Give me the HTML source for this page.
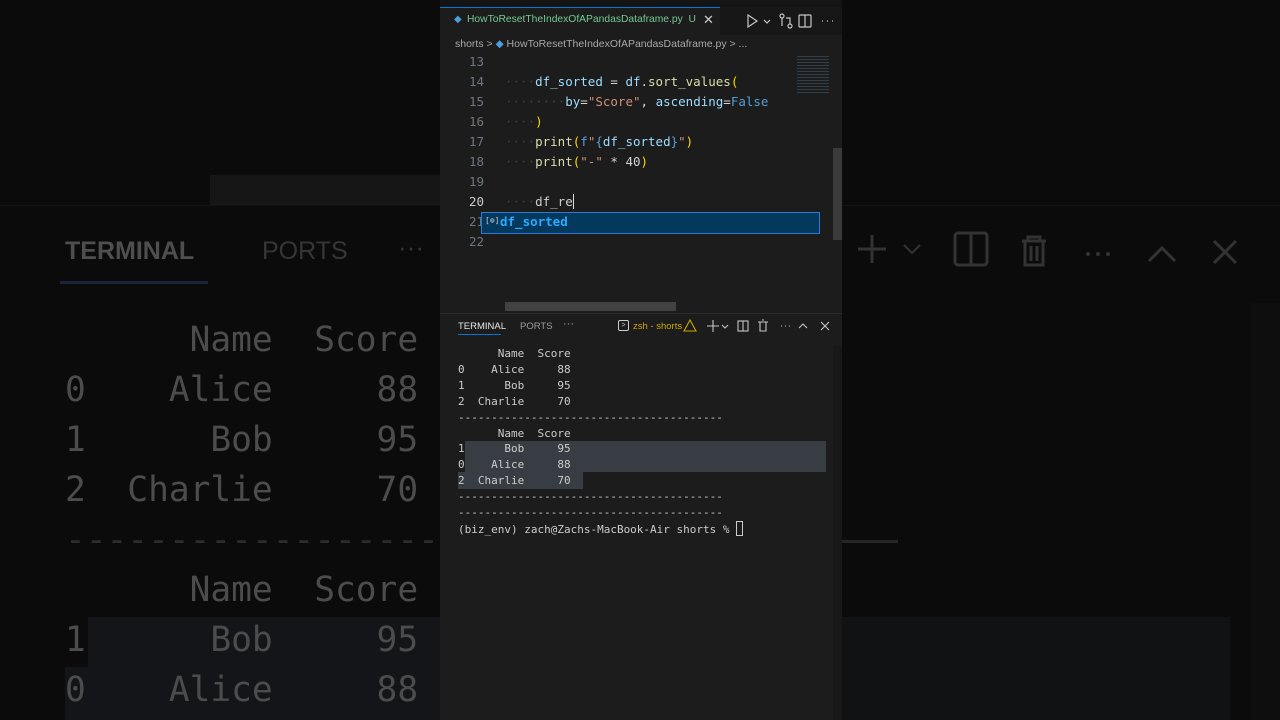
<!DOCTYPE html>
<html><head><meta charset="utf-8"><style>
*{margin:0;padding:0;box-sizing:border-box}
body{width:1280px;height:720px;background:#0b0b0c;position:relative;overflow:hidden;font-family:"Liberation Sans",sans-serif}
.a{position:absolute}
.mono{font-family:"DejaVu Sans Mono","Liberation Mono",monospace;white-space:pre}
.big{font-size:34.5px;color:#4c4c4c;line-height:50px}
.code{font-size:12.5px;line-height:20px}
.term{font-size:11px;line-height:15.9px;color:#cccccc}
.v{color:#9cdcfe}.f{color:#dcdcaa}.s{color:#ce9178}.k{color:#569cd6}.y{color:#ffd700}.w{color:#d4d4d4}.g{color:#404040}
</style></head><body>
<div class="a" style="left:210px;top:175px;width:230px;height:30px;background:#161617"></div>
<div class="a" style="left:0;top:205px;width:440px;height:1px;background:#131313"></div>
<div class="a" style="left:65px;top:237px;font-size:25px;color:#4e4e4e;font-weight:bold">TERMINAL</div>
<div class="a" style="left:262px;top:237px;font-size:25px;color:#363636">PORTS</div>
<div class="a" style="left:398px;top:232px;font-size:26px;color:#363636">···</div>
<div class="a" style="left:60px;top:281px;width:148px;height:3px;background:#17243a"></div>
<div class="a" style="left:88px;top:617px;width:352px;height:103px;background:#131518"></div>
<div class="a" style="left:65px;top:667px;width:23px;height:53px;background:#131518"></div>
<div class="a mono big" style="left:65px;top:315px">      Name  Score
0    Alice     88
1      Bob     95
2  Charlie     70
<span style="color:#2c2c2c">-----------------------------------</span>
      Name  Score
1      Bob     95
0    Alice     88</div>
<div class="a" style="left:842px;top:205px;width:438px;height:1px;background:#131313"></div>
<div class="a" style="left:842px;top:540px;width:56px;height:3px;background:#262626"></div>
<div class="a" style="left:842px;top:617px;width:388px;height:103px;background:#111214"></div>
<div class="a" style="left:1250px;top:303px;width:30px;height:417px;background:#0e0e0f"></div>
<svg class="a" style="left:842px;top:225px" width="400" height="60" viewBox="0 0 400 60" fill="none" stroke="#333" stroke-width="3">
<path d="M30 10v28M16 24h28"/><path d="M62 20l8 8 8-8" stroke-width="2"/>
<rect x="113" y="8" width="32" height="32" rx="3"/><path d="M129 8v32"/>
<path d="M180 16h24M186 16v-4h12v4M183 16v24h18v-24M189 21v15M195 21v15"/>
<circle cx="246" cy="29" r="2" fill="#333" stroke="none"/><circle cx="256" cy="29" r="2" fill="#333" stroke="none"/><circle cx="266" cy="29" r="2" fill="#333" stroke="none"/>
<path d="M307 36l13-13 13 13"/><path d="M372 16l22 22M394 16l-22 22"/>
</svg>
<div class="a" style="left:440px;top:0;width:402px;height:720px;background:#1c1c1c"></div>
<div class="a" style="left:440px;top:0;width:402px;height:7px;background:#141414"></div>
<div class="a" style="left:440px;top:7px;width:402px;height:28px;background:#171717"></div>
<div class="a" style="left:440px;top:7px;width:280px;height:28px;background:#1c1c1c;border-top:1px solid #0078d4"></div>
<div class="a" style="left:454px;top:14px;color:#4a9fd8;font-size:10px">◆</div>
<div class="a" style="left:467px;top:14px;font-size:10.3px;color:#73c991;white-space:nowrap">HowToResetTheIndexOfAPandasDataframe.py&nbsp; U</div>
<div class="a" style="left:703px;top:12px;font-size:13px;color:#ccc">✕</div>
<svg class="a" style="left:745px;top:12px" width="97" height="18" fill="none" stroke="#c5c5c5" stroke-width="1.2">
<path d="M3 3l9 6-9 6z"/><path d="M19 8l3 3 3-3"/><circle cx="37" cy="4" r="2"/><circle cx="45" cy="14" r="2"/><path d="M37 6v8M45 12V6h-4"/><rect x="54" y="3" width="12" height="12" rx="1"/><path d="M60 3v12"/><path d="M77 9h1M82 9h1M87 9h1"/></svg>
<div class="a" style="left:455px;top:38px;font-size:10.5px;color:#a9a9a9;white-space:nowrap">shorts &gt; <span style="color:#4a9fd8">◆</span> HowToResetTheIndexOfAPandasDataframe.py &gt; ...</div>
<div class="a mono code" style="left:458px;top:52px;width:26px;text-align:right;color:#6e7681">13
14
15
16
17
18
19
<span style="color:#ccc">20</span>
21
22</div>
<div class="a mono code" style="left:505px;top:52px">
<span class="g">····</span><span class="v">df_sorted</span> <span class="w">=</span> <span class="v">df</span><span class="w">.</span><span class="f">sort_values</span><span class="y">(</span>
<span class="g">········</span><span class="v">by</span><span class="w">=</span><span class="s">"Score"</span><span class="w">, </span><span class="v">ascending</span><span class="w">=</span><span class="k">False</span>
<span class="g">····</span><span class="y">)</span>
<span class="g">····</span><span class="f">print</span><span class="y">(</span><span class="k">f</span><span class="s">"</span><span class="k">{</span><span class="v">df_sorted</span><span class="k">}</span><span class="s">"</span><span class="y">)</span>
<span class="g">····</span><span class="f">print</span><span class="y">(</span><span class="s">"-"</span> <span class="w">*</span> <span class="w">40</span><span class="y">)</span>

<span class="g">····</span><span style="color:#ccc">df_re</span><span style="border-left:1px solid #ddd"></span></div>
<div class="a" style="left:797px;top:54px;width:32px;height:40px;opacity:.45;background:repeating-linear-gradient(#1c1c1c 0 2px,#4a6a80 2px 3px)"></div>
<div class="a" style="left:833px;top:148px;width:9px;height:92px;background:#3a3a3a"></div>
<div class="a" style="left:481px;top:212px;width:339px;height:22px;background:#04395e;border:1px solid #2b79d8"></div>
<div class="a mono" style="left:485px;top:216px;font-size:8px;color:#ccc">[⊚]</div>
<div class="a mono" style="left:500px;top:214px;font-size:12.5px;color:#2aaaff;font-weight:bold">df_sorted</div>
<div class="a" style="left:505px;top:302px;width:171px;height:9px;background:#424242"></div>
<div class="a" style="left:440px;top:313px;width:402px;height:1px;background:#2b2b2b"></div>
<div class="a" style="left:458px;top:321px;font-size:9.5px;color:#e7e7e7">TERMINAL</div>
<div class="a" style="left:458px;top:334px;width:43px;height:1px;background:#0078d4"></div>
<div class="a" style="left:520px;top:321px;font-size:9.5px;color:#9d9d9d">PORTS</div>
<div class="a" style="left:563px;top:318px;font-size:11px;color:#9d9d9d">···</div>
<div class="a" style="left:618px;top:320px;width:11px;height:11px;border:1px solid #ccc;border-radius:2px;font-size:7px;color:#ccc;line-height:9px;text-align:center">&gt;</div>
<div class="a" style="left:633px;top:321px;font-size:9.5px;color:#cca700">zsh - shorts</div>
<svg class="a" style="left:683px;top:318px" width="150" height="16" fill="none" stroke="#c5c5c5" stroke-width="1.1"><path d="M7 2l6 11H1z" stroke="#cca700"/><path d="M30 2v12M24 8h12"/><path d="M39 7l3 3 3-3"/><rect x="55" y="3" width="10" height="10"/><path d="M60 3v10"/><path d="M75 4h10M77 4v9h6V4M79 2h2"/><path d="M98 8h1M102 8h1M106 8h1"/><path d="M116 10l4-4 4 4"/><path d="M138 4l8 8M146 4l-8 8"/></svg>
<div class="a" style="left:465px;top:441px;width:361px;height:31px;background:#383d43"></div>
<div class="a" style="left:458px;top:472px;width:125px;height:17px;background:#383d43"></div>
<div class="a" style="left:833px;top:346px;width:9px;height:374px;background:#181818"></div>
<div class="a mono term" style="left:458px;top:346px">      Name  Score
0    Alice     88
1      Bob     95
2  Charlie     70
----------------------------------------
      Name  Score
1      Bob     95
0    Alice     88
2  Charlie     70
----------------------------------------
----------------------------------------
(biz_env) zach@Zachs-MacBook-Air shorts % <span style="display:inline-block;width:7px;height:15px;border:1px solid #ccc;vertical-align:-3px"></span></div>
</body></html>
